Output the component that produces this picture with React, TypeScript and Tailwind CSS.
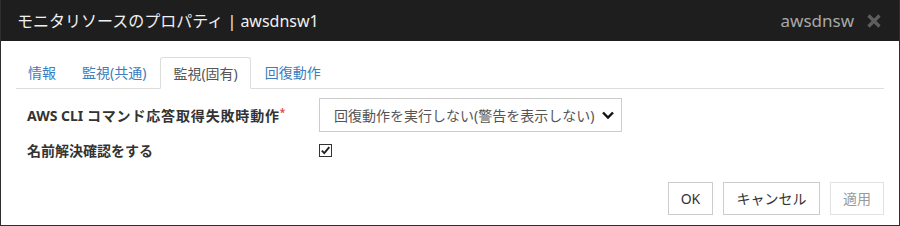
import { useState } from 'react';

const FONT = {
  fontFamily: '"Noto Sans", "Noto Sans CJK JP", sans-serif',
};

const TABS = ['情報', '監視(共通)', '監視(固有)', '回復動作'];

export default function App(): JSX.Element {
  const [active, setActive] = useState(2);
  const [checked, setChecked] = useState(true);

  return (
    <div
      className="flex h-[226px] w-[900px] flex-col overflow-hidden border border-t-0 border-[#2e2e2e] bg-white"
      style={FONT}
    >
      <header className="flex h-[41px] shrink-0 items-center justify-between bg-[#1e1e1e] pl-[16px] pr-[17px]">
        <h1 className="text-[16px] font-normal leading-none text-[#f0f0f0]">
          モニタリソースのプロパティ | awsdnsw1
        </h1>
        <div className="flex items-center gap-[12px]">
          <span className="text-[17px] leading-none text-[#a8a8a8]">awsdnsw</span>
          <svg width="16" height="16" viewBox="0 0 16 16" aria-label="閉じる">
            <path d="M2.5 2.5 L13.5 13.5 M13.5 2.5 L2.5 13.5" stroke="#5e5e5e" strokeWidth="3.2" />
          </svg>
        </div>
      </header>

      <div className="flex flex-1 flex-col px-[15px] pt-[16px] pb-[10px]">
        <nav className="flex h-[32px] items-end border-b border-[#dddddd]">
          {TABS.map((t, i) => (
            <button
              key={t}
              type="button"
              onClick={() => setActive(i)}
              className={
                i === active
                  ? '-mb-px mr-[2px] h-[32px] rounded-t-[3px] border border-b-white border-[#dddddd] bg-white px-[12px] text-[14px] text-[#555555]'
                  : 'mr-[2px] h-[31px] px-[12px] text-[14px] text-[#3b7dbd]'
              }
            >
              {t}
            </button>
          ))}
        </nav>

        <div className="mt-[9px] grid grid-cols-[292px_1fr] items-center gap-y-[8px] pl-[11px]">
          <label className="text-[14px] font-bold text-[#333333]">
            AWS CLI <span className="tracking-[0.06em]">コマンド応答取得失敗時動作</span>
            <span className="align-top text-[10px] text-[#d9534f]">*</span>
          </label>
          <div className="flex h-[34px] w-[303px] items-center justify-between border border-[#cccccc] pl-[14px] pr-[6px]">
            <span className="text-[14px] text-[#555555]">回復動作を実行しない(警告を表示しない)</span>
            <svg width="14" height="10" viewBox="0 0 14 10">
              <path d="M2 2.5 L7 7.5 L12 2.5" fill="none" stroke="#111" strokeWidth="2.4" />
            </svg>
          </div>

          <label className="text-[14px] font-bold text-[#333333]">名前解決確認をする</label>
          <div className="flex h-[20px] items-center">
            <button
              type="button"
              onClick={() => setChecked((c) => !c)}
              className="flex h-[13px] w-[13px] items-center justify-center border border-[#333333] bg-white"
              aria-checked={checked}
              role="checkbox"
            >
              {checked && (
                <svg width="11" height="11" viewBox="0 0 11 11">
                  <path d="M1.8 5.6 L4.3 8.2 L9.3 2.2" fill="none" stroke="#222" strokeWidth="1.9" />
                </svg>
              )}
            </button>
          </div>
        </div>

        <footer className="mt-auto flex justify-end gap-[10px]">
          <button
            type="button"
            className="h-[33px] w-[45px] border border-[#cccccc] bg-white text-[14px] text-[#333333]"
          >
            OK
          </button>
          <button
            type="button"
            className="h-[33px] w-[97px] border border-[#cccccc] bg-white text-[14px] text-[#333333]"
          >
            キャンセル
          </button>
          <button
            type="button"
            disabled
            className="h-[33px] w-[54px] border border-[#e2e2e2] bg-white text-[14px] text-[#9a9a9a]"
          >
            適用
          </button>
        </footer>
      </div>
    </div>
  );
}
